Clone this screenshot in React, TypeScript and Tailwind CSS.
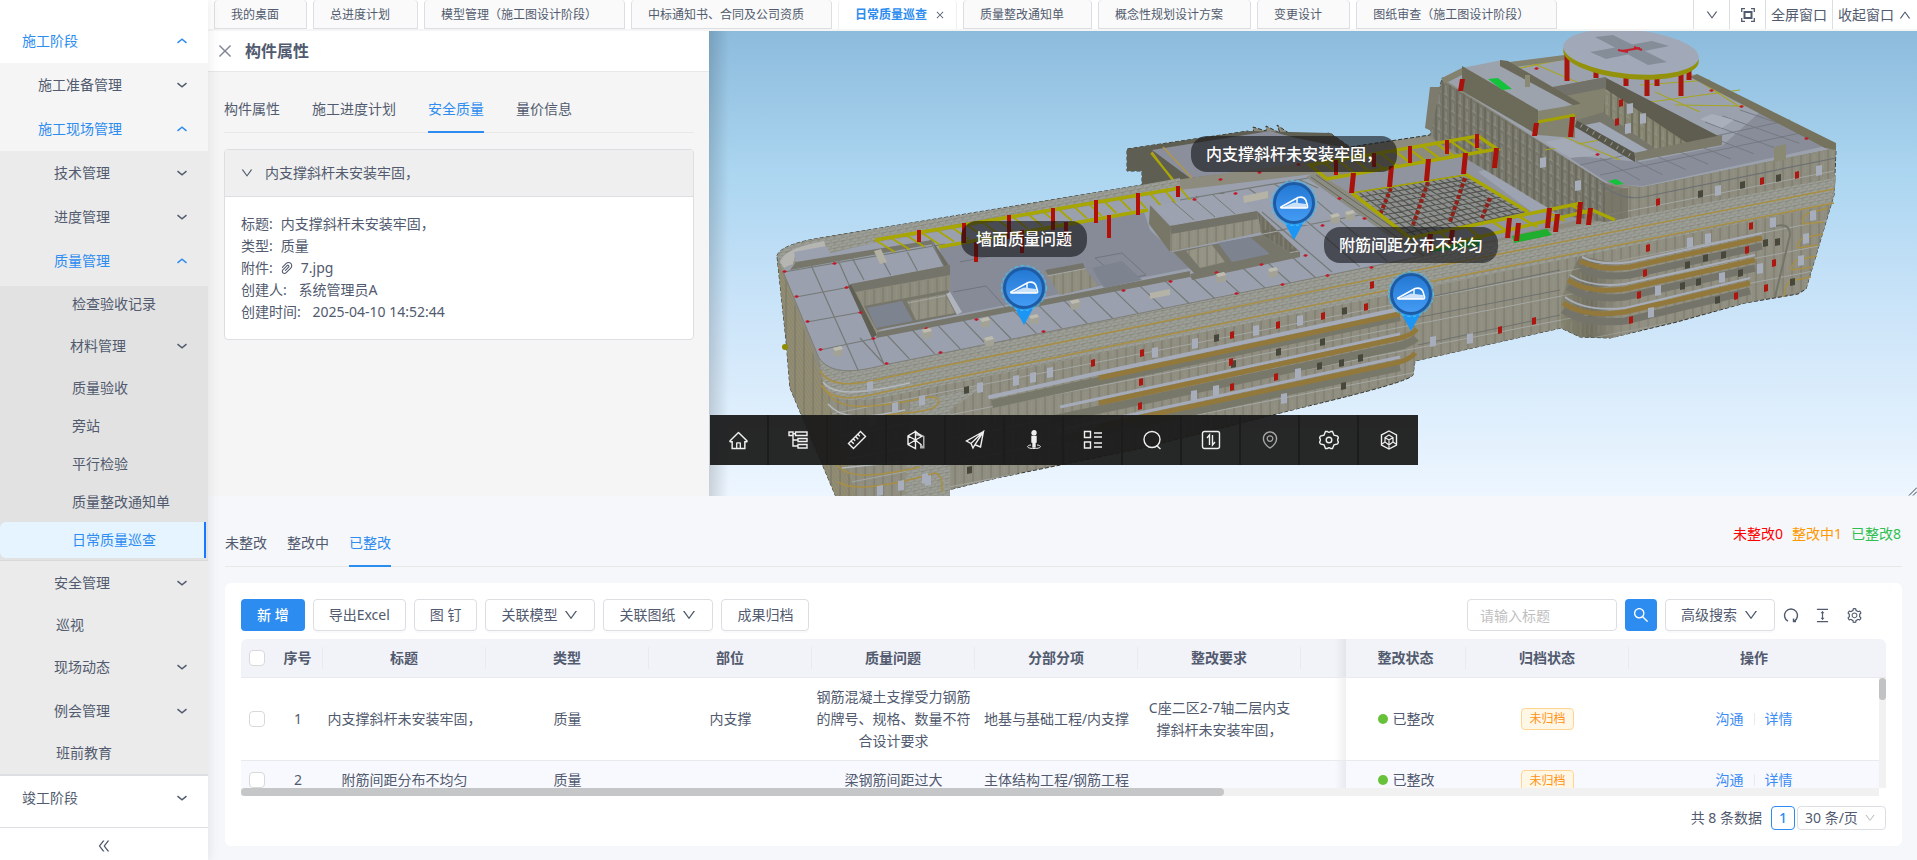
import type { ReactNode } from 'react'
import clsx from 'clsx'
import {
  AiOutlineClose,
  AiOutlineColumnHeight,
  AiOutlineDoubleLeft,
  AiOutlineDown,
  AiOutlineEnvironment,
  AiOutlineHome,
  AiOutlinePaperClip,
  AiOutlineSearch,
  AiOutlineSetting,
  AiOutlineUp,
} from 'react-icons/ai'

/* ---------- 侧边菜单 ---------- */

type MenuRowProps = {
  label: string
  indent: string
  open?: boolean
}

function MenuGroup({ label, indent, open }: MenuRowProps) {
  return (
    <button
      type="button"
      aria-expanded={!!open}
      className={clsx(
        'flex h-11 w-full items-center justify-between pr-5',
        indent,
        open && 'text-[#2d8cf0]'
      )}
    >
      {label}
      {open ? <ChevronUp /> : <ChevronDown />}
    </button>
  )
}

function MenuItem({ label, indent, active }: { label: string; indent: string; active?: boolean }) {
  return (
    <a
      href="#"
      className={clsx(
        'my-0.5 flex h-9 items-center',
        indent,
        active && 'mr-0.5 rounded-l-md border-r-2 border-[#1677ff] bg-[#e6f4ff] text-[#2d8cf0]'
      )}
    >
      {label}
    </a>
  )
}

function ChevronDown() {
  return (
    <svg width="12" height="12" viewBox="0 0 12 12" fill="none" stroke="currentColor" strokeWidth="1.5">
      <path d="M1.5 4.2 6 7.8l4.5-3.6" />
    </svg>
  )
}

function ChevronUp() {
  return (
    <svg width="12" height="12" viewBox="0 0 12 12" fill="none" stroke="currentColor" strokeWidth="1.5">
      <path d="M1.5 7.8 6 4.2l4.5 3.6" />
    </svg>
  )
}

function Sidebar() {
  return (
    <aside className="z-10 flex w-52 shrink-0 flex-col bg-white pt-[19px] shadow-[2px_0_10px_rgba(29,35,41,0.08)]">
      <nav>
        <MenuGroup label="施工阶段" indent="pl-[22px]" open />
        <div className="bg-[#f5f5f5]">
          <MenuGroup label="施工准备管理" indent="pl-[38px]" />
          <MenuGroup label="施工现场管理" indent="pl-[38px]" open />
          <div className="border-b-2 border-[#dcdee2] bg-[#ebebeb] pb-px">
            <MenuGroup label="技术管理" indent="pl-[54px]" />
            <MenuGroup label="进度管理" indent="pl-[54px]" />
            <MenuGroup label="质量管理" indent="pl-[54px]" open />
            <div className="mt-[3px] border-b border-[#d9d9d9] bg-[#e2e2e2]">
              <MenuItem label="检查验收记录" indent="pl-[72px]" />
              <MenuGroup label="材料管理" indent="pl-[70px]" />
              <MenuItem label="质量验收" indent="pl-[72px]" />
              <MenuItem label="旁站" indent="pl-[72px]" />
              <MenuItem label="平行检验" indent="pl-[72px]" />
              <MenuItem label="质量整改通知单" indent="pl-[72px]" />
              <MenuItem label="日常质量巡查" indent="pl-[72px]" active />
            </div>
            <MenuGroup label="安全管理" indent="pl-[54px]" />
            <MenuItem label="巡视" indent="pl-[56px]" />
            <MenuGroup label="现场动态" indent="pl-[54px]" />
            <MenuGroup label="例会管理" indent="pl-[54px]" />
            <MenuItem label="班前教育" indent="pl-[56px]" />
          </div>
        </div>
        <MenuGroup label="竣工阶段" indent="pl-[22px]" />
      </nav>
      <button
        type="button"
        aria-label="收起菜单"
        className="mt-auto flex h-[33px] items-center justify-center border-t border-[#dcdee2]"
      >
        <AiOutlineDoubleLeft size={16} className="mt-1" />
      </button>
    </aside>
  )
}

/* ---------- 顶部页签 ---------- */

const pageTabs = [
  '我的桌面',
  '总进度计划',
  '模型管理（施工图设计阶段）',
  '中标通知书、合同及公司资质',
  '日常质量巡查',
  '质量整改通知单',
  '概念性规划设计方案',
  '变更设计',
  '图纸审查（施工图设计阶段）',
]

function PageTabs() {
  return (
    <header className="flex h-[31px] items-start border-b-2 border-[#f5f5f5] bg-white pl-1.5">
      <div className="flex gap-1.5 text-xs">
        {pageTabs.map(tab =>
          tab === '日常质量巡查' ? (
            <div
              key={tab}
              className="flex h-[29px] items-center rounded-t border-x border-[#f0f0f0] bg-white pt-px pr-[11px] pl-4 font-bold text-[#2d8cf0]"
            >
              <button type="button">{tab}</button>
              <button type="button" aria-label="关闭" className="ml-2 text-[#515a6e]">
                <AiOutlineClose size={10} />
              </button>
            </div>
          ) : (
            <button
              key={tab}
              type="button"
              className="h-[29px] rounded-t border-x border-b border-[#dcdee2] bg-[#fafafa] pt-0.5 pr-[27px] pl-4 whitespace-nowrap"
            >
              {tab}
            </button>
          )
        )}
      </div>
      <div className="ml-auto flex h-[29px] shrink-0 divide-x divide-[#dcdee2] border-l border-[#dcdee2]">
        <button type="button" aria-label="更多" className="flex w-9 items-center justify-center">
          <AiOutlineDown size={14} />
        </button>
        <button type="button" aria-label="全屏" className="flex w-9 items-center justify-center">
          <svg width="14" height="14" viewBox="0 0 14 14" fill="none" stroke="currentColor">
            <path d="M.7 4V.7H4M10 .7h3.3V4M13.3 10v3.3H10M4 13.3H.7V10" strokeWidth="1.3" />
            <rect x="3.5" y="4" width="7" height="6" strokeWidth="2" />
          </svg>
        </button>
        <button type="button" className="w-[67px]">全屏窗口</button>
        <button type="button" className="flex w-[84px] items-center gap-1 pl-[5px]">
          收起窗口
          <AiOutlineUp size={14} />
        </button>
      </div>
    </header>
  )
}

/* ---------- 构件属性面板 ---------- */

function TabBar({ tabs, active, gap }: { tabs: string[]; active: string; gap: string }) {
  return (
    <div role="tablist" className={clsx('flex border-b border-[#e8e8e8]', gap)}>
      {tabs.map(tab => (
        <button
          key={tab}
          type="button"
          role="tab"
          aria-selected={tab === active}
          className={clsx(
            '-mb-px h-[46px] border-b-2',
            tab === active ? 'border-[#2d8cf0] text-[#2d8cf0]' : 'border-transparent'
          )}
        >
          {tab}
        </button>
      ))}
    </div>
  )
}

function PropertyPanel() {
  return (
    <section className="w-[501px] shrink-0 bg-[#f5f5f5]">
      <div className="flex h-[41px] items-center gap-[11px] border-b border-[#e8e8e8] bg-white pl-2">
        <button type="button" aria-label="关闭面板" className="text-[#808695]">
          <AiOutlineClose size={18} />
        </button>
        <h2 className="text-base font-bold">构件属性</h2>
      </div>
      <div className="pt-[15px] pr-[15px] pl-4">
        <TabBar
          tabs={['构件属性', '施工进度计划', '安全质量', '量价信息']}
          active="安全质量"
          gap="gap-8"
        />
        <div className="mt-4 overflow-hidden rounded border border-[#dcdee2] bg-white">
          <button
            type="button"
            aria-expanded
            className="flex h-[47px] w-full items-center gap-[11px] border-b border-[#dcdee2] bg-[#efefef] pl-[15px]"
          >
            <AiOutlineDown size={14} />
            内支撑斜杆未安装牢固，
          </button>
          <div className="px-4 py-4 leading-[22px]">
            <p>标题:<span className="ml-2">内支撑斜杆未安装牢固，</span></p>
            <p>类型:<span className="ml-2">质量</span></p>
            <p className="flex items-center">
              附件:
              <AiOutlinePaperClip size={16} className="mr-1.5 ml-1.5" />
              <a href="#">7.jpg</a>
            </p>
            <p>创建人: <span className="ml-2">系统管理员A</span></p>
            <p>创建时间: <span className="ml-2">2025-04-10 14:52:44</span></p>
          </div>
        </div>
      </div>
    </section>
  )
}

/* ---------- 三维模型 ---------- */

type Point = [number, number]

const lerp = (a: Point, b: Point, t: number): Point => [a[0] + (b[0] - a[0]) * t, a[1] + (b[1] - a[1]) * t]

// 在两条边之间等距连线
function rungs(a: [Point, Point], b: [Point, Point], count: number) {
  let d = ''
  for (let i = 0; i <= count; i++) {
    const p = lerp(a[0], a[1], i / count)
    const q = lerp(b[0], b[1], i / count)
    d += `M${p[0]} ${p[1]}L${q[0]} ${q[1]}`
  }
  return d
}

// 沿长楼外墙的等高线
const frontEdge = (d: number) =>
  `M${819 + d * 0.08} ${358 + d}C${828 + d * 0.08} ${373 + d} ${850} ${374 + d} 884 ${365 + d}L1433 ${254 + d}L1834 ${176 + d}`

// x, y, 高
const columns: [number, number, number][] = [
  [919, 230, 12], [964, 223, 20], [976, 242, 20], [1009, 215, 24], [1022, 230, 23], [1053, 208, 22],
  [1066, 222, 21], [1096, 200, 23], [1109, 215, 23], [1138, 193, 22], [1178, 186, 11],
  [1336, 160, 15], [1374, 153, 14], [1410, 146, 17], [1447, 140, 14], [1477, 134, 14],
]

const bigColumns: [number, number, number][] = [
  [1353, 173, 20], [1391, 166, 21], [1428, 159, 22], [1465, 153, 21], [1496, 148, 20],
  [1430, 234, 18], [1452, 230, 14], [1509, 218, 20], [1518, 223, 18], [1549, 208, 20], [1557, 214, 18],
  [1580, 202, 22], [1590, 208, 17], [1536, 123, 13], [1572, 117, 20], [1462, 79, 12],
]

const redWindows: Point[] = [
  [1091, 363], [1140, 353], [1276, 325], [1321, 316], [1364, 307], [1139, 382], [1230, 335],
  [1138, 406], [1229, 362], [1274, 377], [1230, 387], [1370, 285], [1498, 330], [1532, 321],
  [1656, 202], [1760, 181], [1795, 175], [1749, 226], [1646, 248], [1745, 250], [1643, 273], [1772, 263],
  [1637, 295], [1734, 296], [1764, 288], [1629, 320], [1619, 103], [1615, 122],
]

const darkWindows: Point[] = [
  [1742, 185], [1778, 178], [1700, 194], [1765, 243], [1723, 255], [1705, 258], [1687, 265], [1740, 273],
  [1698, 282], [1682, 286], [1717, 300], [1792, 282], [1344, 311], [1322, 342], [1319, 366], [1278, 352],
  [1216, 338], [1343, 386], [966, 390], [969, 470], [1360, 358], [1233, 364], [1341, 363], [1777, 242],
]

const lightWindows: Point[] = [
  [870, 386], [895, 407], [922, 400], [1016, 380], [1033, 377], [1050, 372], [980, 387], [873, 420],
  [901, 485], [925, 478], [880, 490], [1155, 352], [1195, 343], [1256, 330], [1300, 320], [1194, 395],
  [1216, 390], [1298, 373], [1284, 398], [1470, 338], [1433, 341], [1718, 190], [1708, 238], [1690, 242],
  [1773, 222], [1722, 277], [1760, 268], [1658, 290], [1651, 312], [1819, 170], [1813, 215], [1806, 238],
  [1801, 260], [1630, 108], [1628, 128], [1643, 118], [1543, 162], [1578, 185], [928, 480],
]

const roofDots: Point[] = [
  [784, 272], [796, 297], [807, 322], [820, 350], [846, 288], [860, 313], [873, 339], [886, 364], [834, 264],
  [940, 353], [926, 329], [976, 320], [1043, 332], [1076, 301], [1123, 291], [1170, 282], [1236, 294],
  [1216, 273], [1261, 265], [1282, 285], [1305, 256], [1327, 276], [1371, 268], [1194, 200], [1235, 194],
  [1220, 180], [1259, 173], [1339, 199], [1364, 219], [1322, 226], [1298, 165], [1741, 107], [1536, 69],
  [1597, 155], [1806, 139], [1711, 91],
]

const roofBoxes: Point[] = [[833, 348], [922, 330], [980, 319], [984, 338], [1070, 301], [1029, 316], [1216, 274], [1330, 215], [1345, 212], [1268, 269]]

function BuildingModel() {
  return (
    <svg
      className="block h-full w-full"
      viewBox="709 31 1208 465"
      preserveAspectRatio="xMinYMin slice"
      role="img"
      aria-label="建筑模型"
    >
      <defs>
        <linearGradient id="sky" x1="0" y1="0" x2="0" y2="1">
          <stop offset="0" stopColor="#8cbbdc" />
          <stop offset=".3" stopColor="#abd5f0" />
          <stop offset=".62" stopColor="#cde5f9" />
          <stop offset="1" stopColor="#edf6ff" />
        </linearGradient>
        <linearGradient id="bay" x1="0" y1="0" x2="1" y2="0">
          <stop offset="0" stopColor="#85846f" />
          <stop offset=".3" stopColor="#6f6e5f" />
          <stop offset=".6" stopColor="#908f81" />
        </linearGradient>
        <pattern id="slats" width="9" height="24" patternUnits="userSpaceOnUse" patternTransform="skewY(-11)">
          <path d="M1 0v24" stroke="#7d7c6e" strokeWidth="1.2" />
          <path d="M5.5 3v17" stroke="#97978b" strokeWidth=".8" />
          <path d="M0 23.5h9" stroke="#a3a6a3" strokeWidth="1" />
        </pattern>
        <pattern id="brick" width="8" height="6" patternUnits="userSpaceOnUse" patternTransform="skewY(-11)">
          <rect width="8" height="6" fill="#93948a" />
          <path d="M0 1h6M4 4h4M0 4h1" stroke="#a6aaa9" strokeWidth="1" />
          <path d="M1 2.500h5" stroke="#87877b" strokeWidth="1" />
        </pattern>
        <pattern id="sideBrick" width="9" height="6" patternUnits="userSpaceOnUse" patternTransform="skewY(62)">
          <rect width="9" height="6" fill="#8b8976" />
          <path d="M0 1h9" stroke="#a6945a" strokeWidth="1" />
          <path d="M3 0v6" stroke="#777565" strokeWidth="1" />
        </pattern>
        <pattern id="towerSide" width="7" height="13" patternUnits="userSpaceOnUse" patternTransform="skewY(32)">
          <path d="M1 0v13" stroke="#626152" strokeWidth="1.2" />
          <path d="M4 1v9M2 10h4" stroke="#92948c" strokeWidth=".8" />
        </pattern>
      </defs>

      <rect x="709" y="31" width="1208" height="465" fill="url(#sky)" />

      {/* 长楼轮廓 */}
      <path
        d="M777 256Q780 244 826 237L1142 185V171H1127V149L1248 131L1254 136L1253 127L1266 131V126L1280 133L1277 125L1296 138L1330 133L1350 147L1430 135L1442 78L1836 150L1834 195L1806 289L1798 294L1745 303L1677 322L1610 338L1580 337L1561 328L1415 361L1413 375Q1410 382 1300 408L1143 448L997 478L920 497H836L790 388L786 340Z"
        fill="#8c8b7d"
        stroke="#33332c"
        strokeWidth="1"
        strokeDasharray="4 2"
      />
      <path d="M1127 149 1248 131 1330 133 1350 147 1310 160 1142 185V171H1127Z" fill="#5f5e52" />
      <path d="M1152 150 1270 131 1296 138 1345 148 1310 162 1190 178Z" fill="#8a8f9b" />
      <path d="M1152 152 1178 188M1163 147 1192 178" stroke="#b39745" strokeWidth="1.5" />
      <path d="M1151 153 1175 182" stroke="#a8a600" strokeWidth="2" />

      {/* 外墙 */}
      <path d="M819 362C830 376 850 376 884 368L1433 256 1836 178 1834 195 1806 289 1745 303 1610 338 1561 328 1415 361 1413 375 1300 408 997 478 920 497H836Z" fill="#8f8e80" />
      <path d="M819 362C830 376 850 376 884 368L1433 256 1836 178 1834 195 1806 289 1745 303 1610 338 1561 328 1415 361 1413 375 1300 408 997 478 920 497H836Z" fill="url(#slats)" />
      <path d="M819 358C830 373 850 374 884 365L1433 254 1836 175 1830 205 1433 286 884 397C850 403 835 400 826 392Z" fill="url(#brick)" />
      <path d="M777 256 783 272 812 350 826 392 856 497H836L790 388 786 340Z" fill="url(#sideBrick)" />
      <path d="M910 402 985 385 950 410V497H905Z" fill="url(#brick)" />
      <path d="M777 256Q780 244 826 237L1142 185 1180 178 1180 190 875 243 800 258 783 272Z" fill="url(#brick)" />

      {/* 屋面 */}
      <path d="M783 270 800 260 873 243 1180 190 1313 174 1433 254 884 365C850 374 830 373 819 358Z" fill="#9aa0ae" />
      <path d="M783 272 819 358C830 373 850 374 884 365L1433 254" fill="none" stroke="#7e7f78" strokeWidth="1" />
      <path
        d={
          rungs([[811, 265], [838, 260]], [[858, 370], [884, 364]], 1) +
          rungs([[860, 338], [1292, 257]], [[884, 364], [1316, 278]], 17) +
          rungs([[850, 254], [930, 240]], [[864, 280], [944, 266]], 3) +
          rungs([[1196, 196], [1300, 180]], [[1206, 208], [1318, 188]], 4) +
          rungs([[1262, 212], [1345, 196]], [[1332, 272], [1415, 256]], 3) +
          'M784 272 945 244M796 297 850 287M807 322 862 312M820 350 872 339M1270 232 1365 214M1180 200 1320 176'
        }
        fill="none"
        stroke="#757a76"
        strokeWidth="1.2"
      />
      <path d="M939 247 1144 212 1150 230 1190 268 960 314 950 292Z" fill="#868b97" />
      <path d="M953 292l33-6 20 22M960 262l30-6M1095 258l27-5 24 22-25 5Z" stroke="#717580" fill="none" />
      <path d="M780 262Q784 248 824 241L826 247 795 256 793 264 784 268Z" fill="#b5b5b2" />
      <path d="M794 252 826 246 832 255 796 262Z" fill="#9ba1af" />
      <path d="M796 262 932 240 933 244 790 270Z" fill="#77766b" />
      <path d="M932 240 950 267 946 270 935 248Z" fill="#6d6c60" />

      {/* 左侧天井 */}
      <path d="M851 284 950 265V292L875 333Z" fill="#8d8b7b" />
      <path d="M851 284 950 265V275L855 292Z" fill="#75746a" />
      <path d="M858 292 950 276V290L863 306Z" fill="url(#slats)" />
      <path d="M851 284 877 335 872 338 848 286Z" fill="#605f54" />
      <path d="M864 306 948 290 960 314 877 330Z" fill="#77766b" />
      <path d="M867 308 902 301 913 321 876 328Z" fill="#7e8390" />
      <path d="M907 301 945 294 955 313 916 320Z" fill="#929080" />
      <path d="M907 301 945 294 955 313 916 320Z" fill="url(#slats)" />
      <path d="M946 294 950 292 962 312 957 315Z" fill="#b0b4bd" />
      <path d="M877 332 1190 271V277L876 338Z" fill="#77766b" />

      {/* 中部小天井 */}
      <path d="M1045 272 1083 265 1098 286 1060 295Z" fill="#908e7e" />
      <path d="M1045 272 1083 265 1098 286 1060 295Z" fill="url(#slats)" />
      <path d="M1045 270 1083 263 1085 268 1048 275Z" fill="#75746a" />
      <path d="M1092 268 1122 261 1142 280 1104 288Z" fill="#7e8390" />

      {/* 中部天井 */}
      <path d="M1150 205 1170 226V252L1149 224Z" fill="#777667" />
      <path d="M1170 226 1257 211 1262 232 1170 252Z" fill="#918f80" />
      <path d="M1170 226 1257 211 1262 232 1170 252Z" fill="url(#slats)" />
      <path d="M1170 226 1257 211 1258 219 1171 234Z" fill="#737268" />
      <path d="M1152 206 1234 192 1255 211 1172 225Z" fill="#9ca2b0" />
      <path d="M1172 201l22 19M1193 198l22 19M1213 195l22 19" stroke="#777a72" />
      <path d="M1257 211 1300 252 1295 256 1262 235Z" fill="#6e6d60" />
      <path d="M1257 211 1300 252 1295 256 1262 235Z" fill="url(#slats)" />
      <path d="M1173 252 1262 235 1292 254 1195 274Z" fill="#77766b" />
      <path d="M1186 251 1212 245 1225 262 1200 268Z" fill="#959384" />
      <path d="M1186 251 1212 245 1225 262 1200 268Z" fill="url(#slats)" />
      <path d="M1218 243 1250 237 1270 254 1232 262Z" fill="#7e8390" />
      <path d="M1190 274 1300 252V257L1192 280Z" fill="#77766b" />
      <path d="M1243 196 1268 191 1268 198 1244 203ZM1150 293l20-4v6l-20 4Z" fill="#b4b3a6" />
      <path d="M1314 173 1433 253 1420 258 1306 177Z" fill="#8b8c84" />
      <path d="M1316 175 1430 253M1311 177 1424 256" stroke="#66665c" strokeWidth="1" />

      {/* 采光顶 */}
      <path d="M1325 178 1497 150 1600 215 1433 254 1410 238 1350 193Z" fill="#8f949e" />
      <path d="M1478 172 1515 160 1570 205 1532 212Z" fill="#9da3b1" />
      <path d="M1352 193 1465 175 1528 211 1410 238Z" fill="#8d908f" />
      <path
        d={
          rungs([[1352, 193], [1465, 175]], [[1410, 238], [1528, 211]], 17) +
          rungs([[1352, 193], [1410, 238]], [[1465, 175], [1528, 211]], 10)
        }
        stroke="#55564f"
        strokeWidth="1.2"
      />
      <path d="M1391 188 1380 215M1428 182 1413 225M1465 178 1450 222M1490 198l-8 20" stroke="#8f2118" strokeWidth="4" strokeDasharray="4 2" />
      <path d="M1430 252 1450 242 1480 236V246ZM1512 236l35-7 5 6-38 8Z" fill="#1fae2e" />

      {/* 塔楼 */}
      <path d="M1425 128 1430 87 1442 87 1440 135Z" fill="#7c7b6d" />
      <path d="M1442 78 1462 68 1565 55 1697 75 1836 148 1643 187 1605 183Z" fill="#9ba1ad" />
      <path d="M1430 137 1442 80 1605 183V222L1560 215Z" fill="#77766a" />
      <path d="M1430 137 1442 80 1605 183V222L1560 215Z" fill="url(#towerSide)" />
      <path d="M1605 183Q1622 189 1643 187L1836 148 1834 178 1605 222Z" fill="#8d8c7e" />
      <path d="M1605 183Q1622 189 1643 187L1836 148 1834 178 1605 222Z" fill="url(#slats)" />
      <path d="M1605 183Q1614 188 1628 188V218L1605 222Z" fill="#6f6e60" opacity=".7" />
      <path d="M1600 183Q1620 201 1643 197L1836 158" fill="none" stroke="#6d7072" strokeWidth="1.2" />
      <path d="M1565 155 1640 162 1722 146 1760 112 1830 145 1643 186 1610 184Z" fill="#888d99" />
      <path
        d={
          rungs([[1640, 180], [1822, 138]], [[1600, 158], [1740, 110]], 8) +
          'M1580 165 1790 120M1600 175 1810 131'
        }
        stroke="#737780"
        strokeWidth=".9"
      />
      <path
        d="M1470 78 1560 60M1500 68 1580 100M1530 62 1600 92M1560 135 1620 160M1545 150 1600 140M1655 92 1700 112M1650 102 1740 90M1690 75 1740 107M1640 85 1710 80M1675 105 1745 106"
        stroke="#a6a522"
        strokeWidth="1.2"
      />
      <path d="M1697 74 1836 143 1836 150 1825 148 1690 77Z" fill="#75735e" />
      <path d="M1442 78 1462 68 1565 55V60L1464 74 1444 84Z" fill="#83826f" />

      {/* 塔楼天井 */}
      <path d="M1606 78 1722 138 1640 160 1575 122 1580 108Z" fill="#77766a" />
      <path d="M1606 78 1722 138 1690 145 1604 96Z" fill="#5e5d50" />
      <path d="M1604 88 1690 145 1660 152 1600 110Z" fill="#85846f" />
      <path d="M1604 88 1690 145 1660 152 1600 110Z" fill="url(#towerSide)" />
      <path d="M1553 87 1606 77 1604 112 1577 120Z" fill="#83826f" />
      <path d="M1553 87 1606 77V88L1560 97Z" fill="#73726a" />
      <path d="M1585 125 1600 122 1648 150 1635 155Z" fill="#9fa6b4" />
      <path d="M1576 120 1635 153 1635 162 1575 127Z" fill="#57564a" />
      <path d="M1575 122 1635 158" stroke="#97978c" strokeWidth="4" strokeDasharray="1 6" />
      <path d="M1634 153 1722 135V145L1636 161Z" fill="#7b7a6b" />

      {/* 楼梯间 */}
      <path d="M1462 68 1502 60 1580 104 1538 110Z" fill="#9da3ad" />
      <path d="M1500 60 1508 61 1580 103 1578 108 1500 66Z" fill="#6a6959" />
      <path d="M1462 66 1538 110V135L1462 91Z" fill="#6c6b5a" />
      <path d="M1538 111 1580 104V114L1538 124Z" fill="#85846f" />
      <path d="M1538 123 1575 116V138L1538 135Z" fill="#838270" />
      <path d="M1538 122 1575 115" stroke="#a3a200" strokeWidth="3" />
      <path d="M1488 79 1498 78 1512 89 1502 90ZM1608 181l8-2 8 5-8 1Z" fill="#14c23c" />
      <path d="M1525 75h5v12h-5ZM1774 147l12-3v15l-12 3Z" fill="#8a8974" />
      <path d="M1700 119 1712 114 1734 120 1722 128Z" fill="#aab0bb" />
      <path d="M1545 142 1565 138 1600 155 1570 158Z" fill="#a3a9b5" />

      {/* 停机坪 */}
      <path d="M1567 50v31M1596 68v10M1626 74v12M1647 76v20M1657 76v10M1681 72v24M1689 70v10" stroke="#a8150c" strokeWidth="5" />
      <ellipse cx="1631" cy="56" rx="68" ry="23" fill="#93920a" transform="rotate(5 1631 56)" />
      <ellipse cx="1631" cy="52" rx="68" ry="22" fill="#a1a9b8" transform="rotate(5 1631 52)" />
      <path d="M1595 37 1613 35 1667 62 1648 65ZM1590 52 1652 41 1669 46 1606 59Z" fill="#858d99" />
      <path d="M1618 50 1628 52M1634 47 1642 50M1622 51 1640 48" stroke="#c4202c" strokeWidth="2" />

      {/* 黄色桁架 */}
      <g fill="none" stroke="#a8a600">
        <path d="M875 240 1180 188M939 247 1148 210" strokeWidth="3.5" />
        <path d={rungs([[875, 240], [1180, 188]], [[895, 252], [1190, 200]], 20)} strokeWidth="1.8" />
        <path d="M1310 165 1478 136 1497 149 1327 179ZM1352 193 1410 238M1465 174 1528 212M1410 238 1582 203M1425 250 1592 210 1615 220" strokeWidth="3.5" />
        <path d={rungs([[1310, 165], [1478, 136]], [[1327, 179], [1497, 149]], 12)} strokeWidth="2.2" />
        <path d={rungs([[1440, 232], [1570, 205]], [[1455, 245], [1592, 215]], 5)} strokeWidth="2.5" />
        <path d="M1352 193 1465 175" strokeWidth="1.5" />
      </g>
      {columns.map(([x, y, h]) => (
        <rect key={`${x}-${y}`} x={x - 2} y={y} width="4" height={h} fill="#b01008" />
      ))}
      {bigColumns.map(([x, y, h]) => (
        <path key={`${x}-${y}`} d={`M${x - 2} ${y}h5l-2 ${h}h-5Z`} fill="#a8120a" />
      ))}

      {/* 立面线条 */}
      <g fill="none">
        <path d={frontEdge(13)} stroke="#a88f43" strokeWidth="1.6" />
        <path d={frontEdge(27)} stroke="#a88f43" strokeWidth="1.6" />
        <path d="M826 390C836 410 860 411 930 397Q942 397 937 405Q932 411 905 413L870 416" stroke="#a88f43" strokeWidth="1.6" />
        <path d="M834 460C842 477 862 480 920 467M838 482C850 490 880 489 935 473Q943 474 942 492" stroke="#a88f43" strokeWidth="1.6" />
        <path d="M823 382C832 394 852 396 910 383M828 404C840 418 860 420 905 410M842 468 900 462" stroke="#b3b8bd" strokeWidth="1.5" />
        <path d="M1415 300 1560 270M1415 318 1560 290M1418 345 1560 315" stroke="#6f726f" strokeWidth="1" />
        <path d="M992 404 1099 381 1400 317" stroke="#78786a" strokeWidth="8" />
        <path d="M990 397 1099 373 1400 309" stroke="#a5abb9" strokeWidth="4" strokeLinecap="round" />
        <path d="M1099 378 1400 314" stroke="#92793b" strokeWidth="5" />
        <path d="M1050 420 1400 346Q1412 342 1416 338" stroke="#78786a" strokeWidth="8" />
        <path d="M1060 407 1400 334" stroke="#a5abb9" strokeWidth="3" />
        <path d="M1099 403 1400 338Q1412 335 1417 329" stroke="#92793b" strokeWidth="5" />
        <path d="M1060 440 1400 367" stroke="#78786a" strokeWidth="8" />
        <path d="M1060 430 1400 357" stroke="#a5abb9" strokeWidth="3" />
        <path d="M1099 426 1400 362Q1412 358 1415 353" stroke="#92793b" strokeWidth="5" />
      </g>

      {/* 塔楼弧形阳台 */}
      <path d="M1580 256 1568 279 1561 301V328L1580 337 1612 338 1660 325V250L1610 262Z" fill="url(#bay)" />
      <path d="M1580 256 1568 279 1561 301V328L1580 337 1612 338 1660 325V250L1610 262Z" fill="url(#slats)" opacity=".6" />
      <g fill="none">
        <path d="M1580 268Q1600 279 1630 275L1762 246M1568 287Q1588 301 1625 297L1755 268M1563 310Q1585 325 1625 321L1750 291" stroke="#74746a" strokeWidth="7" />
        <path d="M1582 257Q1600 266 1630 262L1762 233M1570 275Q1590 288 1625 284L1755 255M1565 297Q1585 312 1625 308L1750 278" stroke="#a8adb8" strokeWidth="2" />
        <path d="M1580 261Q1600 271 1630 267L1762 238M1568 280Q1588 294 1625 289L1755 260M1563 303Q1585 318 1625 312L1750 283" stroke="#92793b" strokeWidth="5" />
        <path d="M1770 228Q1790 220 1790 235L1775 297" stroke="#737568" strokeWidth="2" />
        <path d="M1828 208 1808 213Q1800 218 1803 224L1824 222M1823 234 1803 238Q1796 244 1798 248L1818 245M1817 256 1797 260Q1790 266 1792 270L1812 267M1811 277 1790 281Q1784 286 1784 297" stroke="#a88f43" strokeWidth="1.5" />
      </g>

      {lightWindows.map(([x, y]) => (
        <path key={`${x}-${y}`} d={`M${x - 3} ${y - 4}l6-1v10l-6 1Z`} fill="#a7adba" />
      ))}
      {darkWindows.map(([x, y]) => (
        <path key={`${x}-${y}`} d={`M${x - 2} ${y - 3}l5-1v7l-5 1Z`} fill="#47473b" />
      ))}
      {redWindows.map(([x, y]) => (
        <path key={`${x}-${y}`} d={`M${x} ${y - 3}l4-1v7l-4 1Z`} fill="#ad1710" />
      ))}
      {roofDots.map(([x, y]) => (
        <path key={`${x}-${y}`} d={`M${x - 2} ${y}l2-2 3 1-2 2Z`} fill="#c01a2a" />
      ))}
      {roofBoxes.map(([x, y]) => (
        <g key={`${x}-${y}`}>
          <path d={`M${x} ${y}l8-2 2 3v6l-8 2-2-4Z`} fill="#a3a296" />
          <path d={`M${x} ${y}l8-2 2 3-8 2Z`} fill="#bdbcb0" />
        </g>
      ))}
      <path d="M874 251 881 249 887 262 880 264Z" fill="#b2b1a4" />
      <circle cx="785" cy="347" r="3" fill="#8e8d00" />
    </svg>
  )
}

const markers = [
  { text: '墙面质量问题', place: 'left-[315px] top-[190px]' },
  { text: '内支撑斜杆未安装牢固，', place: 'left-[585px] top-[105px]' },
  { text: '附筋间距分布不均匀', place: 'left-[702px] top-[196px]' },
]

function Marker({ text, place }: { text: string; place: string }) {
  return (
    <div className={clsx('absolute flex -translate-x-1/2 flex-col items-center gap-2', place)}>
      <span className="flex h-9 items-center rounded-2xl bg-[#121216]/60 px-[15px] text-base font-medium whitespace-nowrap text-white">
        {text}
      </span>
      <svg width="48" height="62" viewBox="0 0 48 62">
        <defs>
          <linearGradient id="pin" x1="0" y1="0" x2="0" y2="1">
            <stop offset="0" stopColor="#2378d2" />
            <stop offset="1" stopColor="#459cf5" />
          </linearGradient>
        </defs>
        <path d="M13 40 24 60 35 40Z" fill="#1c96f5" />
        <circle cx="24" cy="23" r="22.5" fill="#3aa5f5" fillOpacity=".45" stroke="#4cc3ee" strokeDasharray="3 3" />
        <circle cx="24" cy="23" r="19.5" fill="url(#pin)" stroke="#1d5ca5" strokeWidth="3" />
        <path d="M11 27 28 17.500q6-1.500 8 3l1.500 5.500q.5 2-1.500 2H13q-3 0-2-1Z" fill="none" stroke="#fff" strokeWidth="1.600" />
        <path d="M12 27.500 24 22.500l12 1.500 1 4H13Z" fill="#fff" opacity=".75" />
        <path d="M27 18v5" stroke="#fff" strokeWidth="1.400" />
      </svg>
    </div>
  )
}

function ToolIcon({ children }: { children: ReactNode }) {
  return (
    <svg width="20" height="20" viewBox="0 0 20 20" fill="none" stroke="currentColor" strokeWidth="1.4">
      {children}
    </svg>
  )
}

const tools: { name: string; icon: ReactNode }[] = [
  { name: '主视图', icon: <AiOutlineHome size={21} /> },
  {
    name: '构件树',
    icon: (
      <ToolIcon>
        <path d="M1 2h4v3.500H1zM7.500 2H19v3.500H7.500zM10 8.500h9v3h-9zM10 14.500h9V18h-9zM5 5.500V16h5M5 10h5M5 3.800h2.500" />
      </ToolIcon>
    ),
  },
  {
    name: '测量',
    icon: (
      <ToolIcon>
        <path d="M13.500 1.500 18.500 6.500 6.500 18.500 1.500 13.500ZM10.800 4.200l2 2M8.500 6.500l2.800 2.800M6.200 8.800l2 2M4 11l2.800 2.800" />
      </ToolIcon>
    ),
  },
  {
    name: '剖切',
    icon: (
      <ToolIcon>
        <path d="M9.500 1.500 2 6v8.500l7.500 4V10L2 6M9.500 10l6-3.500-6-5v17M2 14.500l7.500-4.500 6 5" />
        <path d="M9.500 1.500v4L17 7v9l-3-2v4.500h4.500V6Z" fill="currentColor" fillOpacity=".7" stroke="none" />
      </ToolIcon>
    ),
  },
  {
    name: '飞行',
    icon: (
      <ToolIcon>
        <path d="M18.500 1.500 1.500 11l4.500 2.500L18.500 1.500 15.500 17l-6-2.500M6 13.500 8 18l2-3.500 8.500-13" />
      </ToolIcon>
    ),
  },
  {
    name: '漫游',
    icon: (
      <ToolIcon>
        <circle cx="10" cy="2.800" r="2" fill="currentColor" />
        <path d="M8 6.500h4V12h-1v5H9v-5H8Z" fill="currentColor" />
        <path d="M7 15c-5 .5-5 3.500 3 3.500s8-3 3-3.500" strokeWidth="1" />
      </ToolIcon>
    ),
  },
  {
    name: '列表',
    icon: (
      <ToolIcon>
        <path d="M1.500 1.500h6v6h-6zM1.500 12h6v6h-6zM11 3h8M11 7h8M11 13h8M11 17h8" />
      </ToolIcon>
    ),
  },
  {
    name: '搜索',
    icon: (
      <ToolIcon>
        <circle cx="10" cy="9.500" r="8" />
        <path d="m14.500 15.500 4 3.500" />
      </ToolIcon>
    ),
  },
  {
    name: '排序',
    icon: (
      <ToolIcon>
        <rect x="1.500" y="1.500" width="17" height="17" rx="2" />
        <path d="M6 8l2.500-3v10M11.500 5v10L14 12" />
      </ToolIcon>
    ),
  },
  { name: '定位', icon: <AiOutlineEnvironment size={20} className="text-[#a8a8a8]" /> },
  {
    name: '设置',
    icon: (
      <ToolIcon>
        <path d="M6.500 1.500h1.800q1.700 1.400 3.400 0h1.800l1.500 3.700 3.500.8 1 1.800q-1.800 2.200 0 4.400l-1 1.800-3.500.8-1.500 3.700h-1.800q-1.700-1.400-3.400 0H6.500L5 14.800 1.500 14l-1-1.800q1.800-2.200 0-4.400l1-1.800L5 5.200Z" />
        <circle cx="10" cy="10" r="2.800" />
      </ToolIcon>
    ),
  },
  {
    name: '模型',
    icon: (
      <ToolIcon>
        <path d="M10 1 17.500 5v10L10 19 2.500 15V5Z" />
        <path d="M10 5 14 7.500v4.500L10 15l-4-3V7.500ZM6 7.500 10 10l4-2.500M10 10v9M6 12l-3 2M14 12l3 2" strokeWidth="1.200" />
      </ToolIcon>
    ),
  },
]

function ModelViewer() {
  return (
    <section className="relative min-w-0 flex-1 overflow-hidden">
      <BuildingModel />
      <div className="absolute inset-y-0 left-0 w-5 bg-linear-to-r from-black/15 to-transparent" />
      {markers.map(marker => (
        <Marker key={marker.text} {...marker} />
      ))}
      <div className="absolute top-96 left-px flex h-[50px] divide-x-2 divide-[#1c1c1d] bg-[#191919]/94 text-[#f0f0f0]">
        {tools.map(tool => (
          <button
            key={tool.name}
            type="button"
            aria-label={tool.name}
            className="flex w-[59px] items-center justify-center"
          >
            {tool.icon}
          </button>
        ))}
      </div>
      <svg className="absolute right-0 bottom-0" width="9" height="9" viewBox="0 0 9 9" stroke="#444">
        <path d="M1 8.500 9 .5M5 8.500 9 4.500" />
      </svg>
    </section>
  )
}

/* ---------- 巡查记录 ---------- */

const records = [
  {
    id: 1,
    title: '内支撑斜杆未安装牢固，',
    type: '质量',
    part: '内支撑',
    problem: '钢筋混凝土支撑受力钢筋的牌号、规格、数量不符合设计要求',
    section: '地基与基础工程/内支撑',
    demand: 'C座二区2-7轴二层内支撑斜杆未安装牢固，',
  },
  {
    id: 2,
    title: '附筋间距分布不均匀',
    type: '质量',
    part: '',
    problem: '梁钢筋间距过大',
    section: '主体结构工程/钢筋工程',
    demand: '',
  },
]

function Columns({ scrollbar }: { scrollbar?: boolean }) {
  return (
    <colgroup>
      <col className="w-8" />
      <col className="w-[50px]" />
      <col className="w-[163px]" />
      <col className="w-[163px]" />
      <col className="w-[163px]" />
      <col className="w-[163px]" />
      <col className="w-[163px]" />
      <col className="w-[163px]" />
      <col />
      <col className="w-[120px]" />
      <col className="w-[163px]" />
      <col className="w-[250px]" />
      {scrollbar && <col className="w-[7px]" />}
    </colgroup>
  )
}

function HeadCell({ children, last }: { children: ReactNode; last?: boolean }) {
  return (
    <th className="p-0 font-bold">
      <div className={clsx('leading-[22px]', !last && 'border-r border-[#e8eaec]')}>{children}</div>
    </th>
  )
}

function CheckBox({ label }: { label: string }) {
  return (
    <input
      type="checkbox"
      aria-label={label}
      className="mx-auto block size-4 appearance-none rounded border border-[#d9d9d9] bg-white"
    />
  )
}

const fixedEdge = 'bg-linear-to-l from-black/6 to-transparent to-25% p-0'

function RecordTable() {
  return (
    <div className="mt-2 overflow-hidden rounded-t-md">
      <table className="w-full table-fixed border-collapse text-center">
        <Columns scrollbar />
        <thead>
          <tr className="h-[38px] border-b border-[#e8eaec] bg-[#f2f3f8]">
            <th className="p-0">
              <CheckBox label="全选" />
            </th>
            <HeadCell>序号</HeadCell>
            <HeadCell>标题</HeadCell>
            <HeadCell>类型</HeadCell>
            <HeadCell>部位</HeadCell>
            <HeadCell>质量问题</HeadCell>
            <HeadCell>分部分项</HeadCell>
            <HeadCell>整改要求</HeadCell>
            <th className={fixedEdge} />
            <HeadCell>整改状态</HeadCell>
            <HeadCell>归档状态</HeadCell>
            <HeadCell last>操作</HeadCell>
            <th className="p-0" />
          </tr>
        </thead>
      </table>
      <div className="flex">
        <div className="h-[110px] min-w-0 flex-1 overflow-hidden">
          <table className="w-full table-fixed border-collapse text-center leading-[22px]">
            <Columns />
            <tbody>
              {records.map(record => (
                <tr key={record.id} className="border-b border-[#e8eaec] even:bg-[#f8f9fe]">
                  <td className="p-0">
                    <CheckBox label={`选择第${record.id}行`} />
                  </td>
                  <td className="p-0">{record.id}</td>
                  <td className="px-1 py-2">{record.title}</td>
                  <td className="px-1 py-2">{record.type}</td>
                  <td className="px-1 py-2">{record.part}</td>
                  <td className="px-1 py-2">{record.problem}</td>
                  <td className="px-1 py-2">{record.section}</td>
                  <td className="px-2 py-2">{record.demand}</td>
                  <td className={fixedEdge} />
                  <td className="px-1 py-2">
                    <span className="inline-flex items-center gap-[5px]">
                      <i className="size-2.5 rounded-full bg-[#67c23a]" />
                      已整改
                    </span>
                  </td>
                  <td className="px-1 py-2">
                    <span className="inline-block rounded border border-[#ffd591] bg-[#fff7e6] px-[7px] text-xs leading-5 text-[#ff9214]">
                      未归档
                    </span>
                  </td>
                  <td className="px-1 py-2">
                    <span className="inline-flex items-center gap-2.5 text-[#3b8cf5]">
                      <a href="#">沟通</a>
                      <i className="h-3 w-px bg-[#e8eaec]" />
                      <a href="#">详情</a>
                    </span>
                  </td>
                </tr>
              ))}
            </tbody>
          </table>
        </div>
        <div className="w-[7px] bg-[#f1f1f1]">
          <div className="h-[22px] rounded-sm bg-[#c1c2c4]" />
        </div>
      </div>
      <div className="mr-[7px] h-2 bg-[#f1f1f1]">
        <div className="h-2 w-3/5 rounded-sm bg-[#c5c6c8]" />
      </div>
    </div>
  )
}

function ToolButton({ children }: { children: ReactNode }) {
  return (
    <button
      type="button"
      className="flex h-8 items-center gap-1.5 rounded border border-[#dcdee2] bg-white px-[15px] shadow-[0_2px_0_rgba(0,0,0,0.02)]"
    >
      {children}
    </button>
  )
}

function RecordPanel() {
  return (
    <section className="flex-1 bg-[#f5f7fa] pt-[25px] pr-[15px] pb-3 pl-[17px]">
      <div className="relative">
        <TabBar tabs={['未整改', '整改中', '已整改']} active="已整改" gap="gap-5" />
        <div className="absolute top-0.5 right-px flex gap-[9px] leading-[22px]">
          <span className="text-[#ff0000]">未整改0</span>
          <span className="text-[#ff9900]">整改中1</span>
          <span className="text-[#2fbf52]">已整改8</span>
        </div>
      </div>
      <div className="mt-4 rounded-md bg-white px-4 pt-4 pb-4">
        <div className="flex items-center gap-2">
          <button type="button" className="h-8 rounded bg-[#2d8cf0] px-4 font-medium text-white">
            新 增
          </button>
          <ToolButton>导出Excel</ToolButton>
          <ToolButton>图 钉</ToolButton>
          <ToolButton>
            关联模型
            <AiOutlineDown size={16} />
          </ToolButton>
          <ToolButton>
            关联图纸
            <AiOutlineDown size={16} />
          </ToolButton>
          <ToolButton>成果归档</ToolButton>
          <div className="mr-[23px] ml-auto flex items-center gap-2">
            <input
              type="text"
              aria-label="标题"
              placeholder="请输入标题"
              className="h-8 w-[150px] rounded border border-[#dcdee2] px-3 placeholder:text-[#bfbfbf]"
            />
            <button
              type="button"
              aria-label="搜索"
              className="flex size-8 items-center justify-center rounded bg-[#2d8cf0] text-white"
            >
              <AiOutlineSearch size={18} />
            </button>
            <ToolButton>
              高级搜索
              <AiOutlineDown size={16} />
            </ToolButton>
            <div className="flex gap-[15px]">
              <button type="button" aria-label="刷新">
                <svg width="16" height="16" viewBox="0 0 16 16" fill="none" stroke="currentColor" strokeWidth="1.4">
                  <path d="M5 14.200A6.500 6.500 0 1 1 11 14.200M10.500 11.500v3h2.500" />
                </svg>
              </button>
              <button type="button" aria-label="密度">
                <AiOutlineColumnHeight size={17} />
              </button>
              <button type="button" aria-label="列设置">
                <AiOutlineSetting size={17} />
              </button>
            </div>
          </div>
        </div>
        <RecordTable />
        <div className="mt-2.5 flex h-6 items-center justify-end">
          <span>共 8 条数据</span>
          <button
            type="button"
            className="mr-0.5 ml-[9px] size-6 rounded border border-[#2d8cf0] font-medium text-[#2d8cf0]"
          >
            1
          </button>
          <div className="relative">
            <select
              aria-label="每页条数"
              className="block h-6 w-[89px] appearance-none rounded border border-[#dcdee2] bg-white pl-[7px]"
            >
              <option>30 条/页</option>
            </select>
            <AiOutlineDown size={12} className="pointer-events-none absolute top-1.5 right-2.5 text-[#bfbfbf]" />
          </div>
        </div>
      </div>
    </section>
  )
}

export default function App() {
  return (
    <div className="flex min-h-screen bg-[#f5f7fa] font-['Noto_Sans','Noto_Sans_CJK_SC',sans-serif] text-sm text-[#515a6e]">
      <Sidebar />
      <main className="flex min-w-0 flex-1 flex-col">
        <PageTabs />
        <div className="flex h-[465px]">
          <PropertyPanel />
          <ModelViewer />
        </div>
        <RecordPanel />
      </main>
    </div>
  )
}
